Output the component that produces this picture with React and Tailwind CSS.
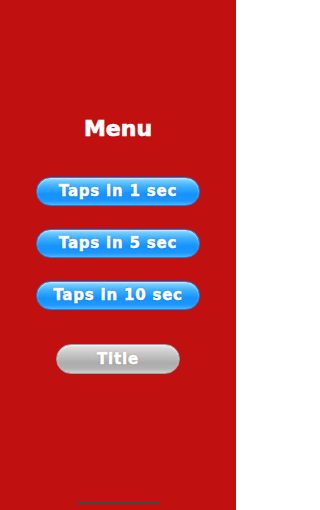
import React from 'react';

const items = ['Taps in 1 sec', 'Taps in 5 sec', 'Taps in 10 sec'];

const BlueButton = ({ label }) => (
  <button className="w-[164px] h-[29px] rounded-full border border-[#1b7fe6] bg-[linear-gradient(to_bottom,#8ad8ff_0%,#3fb0ff_30%,#1592ff_60%,#1d97ff_85%,#4cb4ff_100%)] shadow-[inset_0_1px_2px_rgba(255,255,255,0.6)] flex items-center justify-center">
    <span className="text-white text-[15px] font-bold tracking-[0.8px] leading-none [font-family:'DejaVu_Sans',sans-serif] [-webkit-text-stroke:0.5px_white] [text-shadow:0_0_2px_rgba(0,60,160,0.6)]">
      {label}
    </span>
  </button>
);

export default function App() {
  return (
    <div className="relative w-[236px] h-[510px] bg-[#c11010] flex flex-col items-center">
      <div className="mt-[114px] h-[30px] leading-[30px] text-white text-[22px] font-bold [font-family:'DejaVu_Sans',sans-serif] [-webkit-text-stroke:0.7px_white]">
        Menu
      </div>

      <div className="mt-[33px] flex flex-col items-center gap-[23px]">
        {items.map((label) => (
          <BlueButton key={label} label={label} />
        ))}
      </div>

      <button className="mt-[34px] w-[124px] h-[30px] rounded-full border border-[#a0a0a0] bg-[linear-gradient(to_bottom,#e2e2e2_0%,#c4c4c4_35%,#acacac_65%,#b4b4b4_85%,#d0d0d0_100%)] shadow-[inset_0_1px_2px_rgba(255,255,255,0.7)] flex items-center justify-center">
        <span className="text-white text-[15px] font-bold tracking-[0.8px] leading-none [font-family:'DejaVu_Sans',sans-serif] [-webkit-text-stroke:0.5px_white] [text-shadow:0_0_2px_rgba(80,80,80,0.5)]">
          Title
        </span>
      </button>

      {/* home indicator */}
      <div className="absolute bottom-[6px] left-1/2 -translate-x-1/2 w-[84px] h-[2px] rounded-full bg-[#3b4a50]" />
    </div>
  );
}
